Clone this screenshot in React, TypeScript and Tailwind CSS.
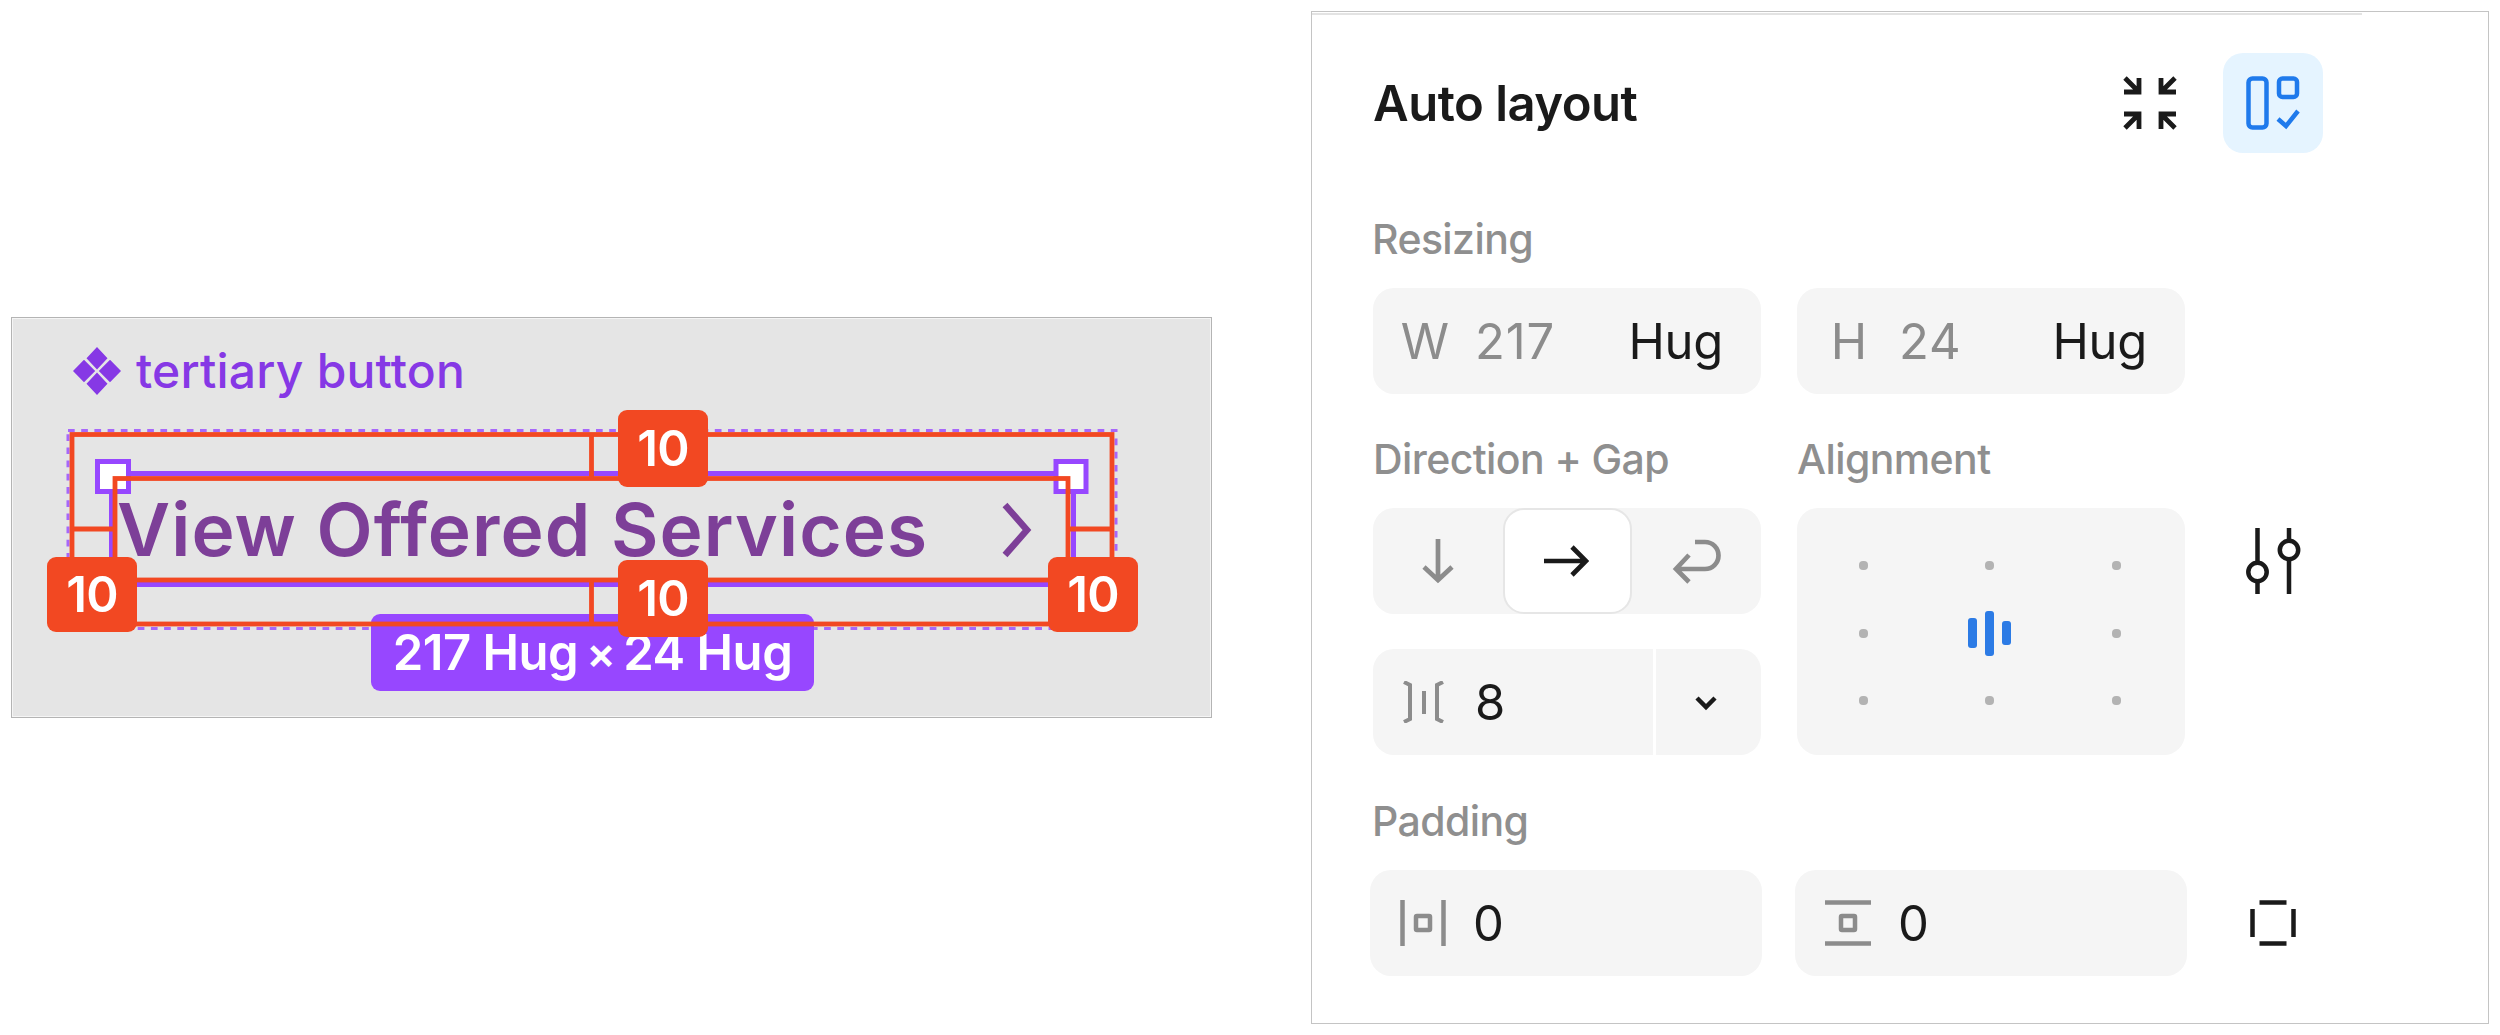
import type { ReactNode } from 'react'
import clsx from 'clsx'

function Field({ icon, value, mode, wide }: { icon: ReactNode; value: string; mode?: string; wide?: boolean }) {
  return (
    <div
      className={clsx(
        'flex h-[106px] items-center rounded-[21px] bg-[#f5f5f5] text-[49px] leading-none',
        wide ? 'w-[392px] pl-[28px]' : 'w-[388px] pl-[27px]'
      )}
    >
      <span className="flex w-[50px] shrink-0 justify-center text-[#8c8c8c]">{icon}</span>
      <span className={clsx('ml-[25px] flex-1', mode ? 'tracking-[0.8px] text-[#8c8c8c]' : 'text-[#1a1a1a]')}>
        {value}
      </span>
      {mode && <span className="mr-[38px] tracking-[-0.3px] text-[#1a1a1a]">{mode}</span>}
    </div>
  )
}

function SpacingBadge({ className }: { className: string }) {
  return (
    <div
      className={clsx(
        'absolute flex w-[90px] items-center justify-center rounded-[9px] bg-[#f24822] text-[49px] leading-none font-semibold tracking-[-0.8px] text-white',
        className
      )}
    >
      10
    </div>
  )
}

function Label({ children }: { children: ReactNode }) {
  return (
    <div className="h-[50px] text-[41px] leading-[50px] font-medium tracking-[-0.6px] whitespace-nowrap text-[#8f8f8f]">
      {children}
    </div>
  )
}

function Canvas() {
  return (
    <div className="relative mt-[317px] ml-[11px] h-[401px] w-[1201px] border border-[#b4b4b4] bg-[#e5e5e5] ring-1 ring-white/60 ring-inset">
      <div className="flex items-center pt-[23px] pl-[61px] text-[#8638e5]">
        <svg width="48" height="48" viewBox="0 0 48 48" fill="currentColor">
          <path d="M24 0l10.500 11.200L24 22.400 13.500 11.200zM24 25.600l10.500 11.200L24 48 13.500 36.800zM11 12.800L22.200 24 11 35.200 0 24zM37 12.800L48 24 37 35.200 25.800 24z" />
        </svg>
        <span className="ml-[15px] text-[48px] leading-[60px] font-medium tracking-[0.2px] whitespace-nowrap">
          tertiary button
        </span>
      </div>

      <div className="absolute top-[172px] left-[105px] flex items-center text-[#7d3f98]">
        <span className="text-[73px] leading-[80px] font-semibold tracking-[1.1px] whitespace-nowrap">
          View Offered Services
        </span>
      </div>
      <svg className="absolute top-[183px] left-[988px]" width="36" height="58" fill="none" stroke="#7d3f98" strokeWidth="6.500">
        <path d="M5 4l22 25L5 54" />
      </svg>

      <div className="absolute top-[296px] left-[359px] flex h-[77px] w-[443px] items-center justify-center gap-[8px] rounded-[9px] bg-[#9747ff] text-[49px] leading-none font-semibold tracking-[-0.5px] whitespace-nowrap text-white">
        <span>217 Hug</span>
        <span className="text-[44px]">×</span>
        <span>24 Hug</span>
      </div>

      {/* selection outline, handles and padding guides */}
      <svg className="absolute top-[-1px] left-[-1px]" width="1201" height="401" fill="none">
        <rect x="57" y="113.500" width="1048" height="198" stroke="#9747ff" strokeOpacity=".8" strokeWidth="3" strokeDasharray="6.700 6.500" />
        <rect x="100.500" y="156.500" width="962" height="111" stroke="#9747ff" strokeWidth="5" />
        <rect x="86.500" y="144.500" width="31" height="30" fill="#fff" stroke="#9747ff" strokeWidth="5" />
        <rect x="1045" y="144.500" width="30" height="30" fill="#fff" stroke="#9747ff" strokeWidth="5" />
        <g stroke="#f24822" strokeWidth="4.800">
          <rect x="61" y="117.500" width="1040" height="189.500" />
          <rect x="104" y="161.500" width="953" height="101.500" />
          <path d="M580.500 118v44M580.500 262v44M61 212h43M1059 212h42" />
        </g>
      </svg>

      <SpacingBadge className="top-[92px] left-[606px] h-[77px]" />
      <SpacingBadge className="top-[242px] left-[606px] h-[77px]" />
      <SpacingBadge className="top-[239px] left-[35px] h-[75px]" />
      <SpacingBadge className="top-[239px] left-[1036px] h-[75px]" />
    </div>
  )
}

function AlignmentGrid() {
  const dot = <span className="size-[9px] rounded-[4px] bg-[#b3b3b3]" />
  return (
    <div className="grid h-[247px] w-[388px] grid-cols-[repeat(3,126.500px)] grid-rows-[repeat(3,67.500px)] place-content-center place-items-center rounded-[21px] bg-[#f5f5f5] pt-[3px] pr-[3px]">
      {dot}
      {dot}
      {dot}
      {dot}
      <div className="flex items-center gap-[8px]">
        <span className="h-[30px] w-[9px] rounded-[3px] bg-[#2c7be5]" />
        <span className="h-[45px] w-[9px] rounded-[3px] bg-[#2c7be5]" />
        <span className="h-[24px] w-[9px] rounded-[3px] bg-[#2c7be5]" />
      </div>
      {dot}
      {dot}
      {dot}
      {dot}
    </div>
  )
}

function Panel() {
  return (
    <div className="mt-[11px] ml-[99px] h-[1013px] w-[1178px] border border-[#c4c4c4] bg-white">
      <div className="mt-px h-[2px] w-[1050px] bg-[#e3e3e3]" />

      <div className="mt-[38px] flex h-[100px] items-center pl-[61px]">
        <h2 className="w-[750px] text-[49px] leading-none font-semibold tracking-[-0.5px] whitespace-nowrap text-[#1a1a1a]">
          Auto layout
        </h2>
        <svg width="54" height="54" viewBox="0 0 54 54" fill="none" stroke="#1a1a1a" strokeWidth="4.800">
          <path d="M2 2l14 14M16 2v14H1M52 2L38 16M38 2v14h15M2 52l14-14M16 53V38H1M52 52L38 38M38 53V38h15" />
        </svg>
        <div className="ml-[46px] flex size-[100px] items-center justify-center rounded-[20px] bg-[#e5f4ff]">
          <svg width="54" height="54" viewBox="0 0 54 54" fill="none" stroke="#1f7aec" strokeWidth="4.500">
            <rect x="2.500" y="2.500" width="18" height="49" rx="4" />
            <rect x="33" y="2.500" width="18" height="18.500" rx="3.500" />
            <path d="M32 43l8 7 12-15" />
          </svg>
        </div>
      </div>

      <div className="mt-[61px] ml-[60px]">
        <Label>Resizing</Label>
      </div>
      <div className="mt-[24px] ml-[61px] flex gap-[36px]">
        <Field icon="W" value="217" mode="Hug" />
        <Field icon="H" value="24" mode="Hug" />
      </div>

      <div className="mt-[40px] ml-[61px] flex">
        <div className="w-[424px]">
          <Label>Direction + Gap</Label>
          <div className="mt-[24px] flex h-[106px] w-[388px] rounded-[21px] bg-[#f5f5f5]">
            <div className="flex w-[130px] items-center justify-center">
              <svg width="32" height="46" fill="none" stroke="#8c8c8c" strokeWidth="4.700">
                <path d="M16 1v40M2 29l14 13 14-13" />
              </svg>
            </div>
            <div className="flex w-[129px] items-center justify-center rounded-[21px] border-2 border-[#e6e6e6] bg-white pr-[3px]">
              <svg width="46" height="32" fill="none" stroke="#1a1a1a" strokeWidth="4.700">
                <path d="M1 16h41M29 2l14 14-14 14" />
              </svg>
            </div>
            <div className="flex w-[129px] items-center justify-center">
              <svg width="49" height="46" fill="none" stroke="#8c8c8c" strokeWidth="4.700">
                <path d="M23 4h10a13 13 0 0 1 0 27H4M17 17L4 31l13 13" />
              </svg>
            </div>
          </div>
          <div className="mt-[35px] flex gap-[3px] text-[49px] leading-none text-[#1a1a1a]">
            <div className="flex h-[106px] w-[280px] items-center rounded-l-[21px] bg-[#f5f5f5] pl-[30px]">
              <svg width="42" height="42" fill="none" stroke="#8c8c8c" strokeWidth="4">
                <path d="M1 1l6 3v34l-6 3M21 10v23M40 1l-6 3v34l6 3" />
              </svg>
              <span className="ml-[30px]">8</span>
            </div>
            <div className="flex h-[106px] w-[105px] items-center justify-center rounded-r-[21px] bg-[#f5f5f5] pt-[2px] pr-[5px]">
              <svg width="22" height="15" fill="none" stroke="#1a1a1a" strokeWidth="4.500">
                <path d="M2 2l9 9 9-9" />
              </svg>
            </div>
          </div>
        </div>
        <div>
          <Label>Alignment</Label>
          <div className="mt-[24px] flex">
            <AlignmentGrid />
            <svg className="mt-[20px] ml-[60px]" width="56" height="66" fill="none" stroke="#1a1a1a" strokeWidth="4.500">
              <path d="M12.500 0v35M12.500 53v13M44 0v13M44 31v35" />
              <circle cx="12.500" cy="44" r="9.200" />
              <circle cx="44" cy="22" r="9.200" />
            </svg>
          </div>
        </div>
      </div>

      <div className="mt-[41px] ml-[60px]">
        <Label>Padding</Label>
      </div>
      <div className="mt-[24px] ml-[58px] flex items-center gap-[33px]">
        <Field
          wide
          value="0"
          icon={
            <svg width="48" height="48" fill="none" stroke="#8c8c8c" strokeWidth="4.500">
              <path d="M3.500 1v46M44.500 1v46" />
              <rect x="17" y="17" width="14" height="14" rx="1" />
            </svg>
          }
        />
        <Field
          wide
          value="0"
          icon={
            <svg width="48" height="48" fill="none" stroke="#8c8c8c" strokeWidth="4.500">
              <path d="M1 3.500h46M1 44.500h46" />
              <rect x="17" y="17" width="14" height="14" rx="1" />
            </svg>
          }
        />
        <svg className="ml-[29px]" width="48" height="48" fill="none" stroke="#1a1a1a" strokeWidth="4.500">
          <path d="M10.500 3.500h27M10.500 44.500h27M3.500 10v28M44.500 10v28" />
        </svg>
      </div>
    </div>
  )
}

export default function App() {
  return (
    <div className="flex h-[1035px] w-[2500px] items-start overflow-hidden bg-white font-['Inter',sans-serif]">
      <Canvas />
      <Panel />
    </div>
  )
}
